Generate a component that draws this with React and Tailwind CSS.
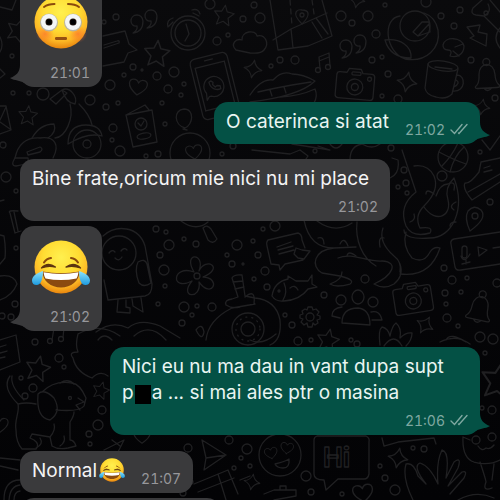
import React from "react";

const messages = [
  { id: 1, emoji: "flushed", time: "21:01", tail: true, layout: "w-fit" },
  { id: 2, mine: true, text: "O caterinca si atat", time: "21:02", tail: true, inline: true, layout: "w-fit mt-[15px]" },
  { id: 3, text: "Bine frate,oricum mie nici nu mi place", time: "21:02", layout: "w-full mt-[15px]" },
  { id: 4, emoji: "joy", time: "21:02", tail: true, layout: "w-fit mt-[5px]" },
  {
    id: 5,
    mine: true,
    text: (
      <>
        Nici eu nu ma dau in vant dupa supt{" "}
        <span className="whitespace-nowrap">
          p<span className="mx-px inline-block h-[19px] w-4 bg-black align-[-5px]" />a
        </span>{" "}
        ... si mai ales ptr o masina
      </>
    ),
    time: "21:06",
    tail: true,
    layout: "w-full mt-4"
  },
  {
    id: 6,
    text: (
      <>
        Normal
        <Joy className="ml-0.5 inline-block h-[24px] w-[26px] align-[-5px]" />
      </>
    ),
    time: "21:07",
    inline: true,
    layout: "w-fit mt-4"
  },
  { id: 7, layout: "mt-[5px] min-h-[42px] min-w-[201px]" }
];

function FaceFill({ id }) {
  return (
    <defs>
      <radialGradient id={id} cx="0.5" cy="0.32" r="0.68">
        <stop offset="0" stopColor="#fff04f" />
        <stop offset="0.5" stopColor="#ffdc33" />
        <stop offset="0.8" stopColor="#fdb725" />
        <stop offset="1" stopColor="#e8850e" />
      </radialGradient>
      <radialGradient id={`${id}-blush`}>
        <stop offset="0" stopColor="#fb6a2c" stopOpacity="0.65" />
        <stop offset="1" stopColor="#fb6a2c" stopOpacity="0" />
      </radialGradient>
      <linearGradient id={`${id}-tear`} x1="0" y1="0" x2="0" y2="1">
        <stop offset="0" stopColor="#8fe3fb" />
        <stop offset="1" stopColor="#1d9be0" />
      </linearGradient>
    </defs>
  );
}

function Flushed({ className }) {
  return (
    <svg viewBox="0 0 58 54" className={className} role="img" aria-label="flushed face">
      <FaceFill id="flushed" />
      <circle cx="29" cy="26" r="26.500" fill="url(#flushed)" />
      <circle cx="13" cy="38" r="9" fill="url(#flushed-blush)" />
      <circle cx="46" cy="38" r="9" fill="url(#flushed-blush)" />
      <path d="M12 11Q16 8 22.500 8M36 8Q43 8 47 11" fill="none" stroke="#8a4a0c" strokeWidth="2" strokeLinecap="round" />
      <circle cx="17" cy="26.500" r="9" fill="#b9b4a2" />
      <circle cx="41" cy="26.500" r="9" fill="#b9b4a2" />
      <circle cx="17" cy="26" r="8" fill="#f4f6f6" />
      <circle cx="41" cy="26" r="8" fill="#f4f6f6" />
      <circle cx="17" cy="26" r="3.500" fill="#1a100a" />
      <circle cx="41" cy="26" r="3.500" fill="#1a100a" />
      <circle cx="17" cy="26" r="2.500" fill="#000" />
      <circle cx="41" cy="26" r="2.500" fill="#000" />
      <rect x="23" y="41" width="12" height="3" rx="1.200" fill="#965011" />
    </svg>
  );
}

function Joy({ className }) {
  return (
    <svg viewBox="0 0 58 54" className={className} role="img" aria-label="face with tears of joy">
      <FaceFill id="joy" />
      <circle cx="29" cy="27" r="26.500" fill="url(#joy)" />
      <path d="M12 22.500Q14.500 18.500 19 18M39 18Q43.500 18.500 46 22.500" fill="none" stroke="#8a4a0c" strokeWidth="2" strokeLinecap="round" />
      <path d="M9.500 28Q15.500 21.500 23.500 27Q15.500 25.500 9.500 28ZM34 27Q42 21.500 48.500 28Q42 25.500 34 27Z" fill="#5c3410" stroke="#5c3410" strokeWidth="1.300" strokeLinejoin="round" />
      <path d="M10.500 31.500Q29 35 47.500 31.500C47.500 41 39 47.500 29 47.500S10.500 41 10.500 31.500Z" fill="#8a4a10" />
      <path d="M11.500 32.300Q29 35.500 46.500 32.300Q46 36 44.500 38.500Q29 41.500 13.500 38.500Q12 36 11.500 32.300Z" fill="#fff" />
      <path d="M11 31C5 33 0 36 0 40.500C0 43.500 2 45 4.500 45C9 45 11 39 11 31ZM47 31C53 33 58 36 58 40.500C58 43.500 56 45 53.500 45C49 45 47 39 47 31Z" fill="url(#joy-tear)" />
    </svg>
  );
}

function Star({ x, y, s = 1, r = 0 }) {
  return (
    <path
      transform={`translate(${x} ${y}) rotate(${r}) scale(${s})`}
      d="M0-11L3-4L11-3L5 3L7 11L0 7L-7 11L-5 3L-11-3L-3-4Z"
    />
  );
}

function Spark({ x, y, s = 1, r = 10 }) {
  return <path transform={`translate(${x} ${y}) rotate(${r}) scale(${s})`} d="M0-10Q2-2 10 0Q2 2 0 10Q-2 2-10 0Q-2-2 0-10Z" />;
}

function Heart({ x, y, s = 1, r = 0 }) {
  return (
    <path
      transform={`translate(${x} ${y}) rotate(${r}) scale(${s})`}
      d="M0 8C-6 4-9 1-9-3C-9-8-2-9 0-4C2-9 9-8 9-3C9 1 6 4 0 8Z"
    />
  );
}

function Camera({ x, y, r }) {
  return (
    <g transform={`translate(${x} ${y}) rotate(${r})`}>
      <path d="M-16-12H-9L-7-16H5L7-12H16Q19-12 19-9V11Q19 14 16 14H-16Q-19 14-19 11V-9Q-19-12-16-12Z" />
      <circle cy="2" r="8" />
      <circle cy="2" r="3.500" />
      <rect x="-4" y="-13" width="9" height="3" rx="1" />
      <circle cx="14" cy="-7" r="2" />
    </g>
  );
}

function Bell({ x, y, r }) {
  return (
    <g transform={`translate(${x} ${y}) rotate(${r})`}>
      <path d="M-12 11Q-8 8-8 0C-8-14 8-14 8 0Q8 8 12 11Q13 13 9 13H-10Q-13 13-12 11ZM-4 13Q0 18 4 13" />
      <circle cy="-13" r="3.500" />
    </g>
  );
}

function Quotes({ x, y }) {
  return (
    <g transform={`translate(${x} ${y})`}>
      <path d="M0-7C-8-7-8 5 0 4Q1 8-4 11Q6 10 6-1Q5-7 0-7Z" />
      <path d="M14-12C6-12 6 0 14-1Q15 3 10 6Q20 5 20-6Q19-12 14-12Z" />
    </g>
  );
}

// [x, y, radius]
const dots = [
  [116, 17, 3], [104, 22, 2], [210, 4, 5], [228, 35, 2], [243, 19, 3], [217, 41, 4], [254, 5, 3], [260, 18, 5],
  [133, 67, 3], [142, 70, 1], [124, 75, 2], [157, 76, 4], [174, 72, 5], [168, 89, 4], [184, 84, 2], [181, 95, 2],
  [110, 85, 5], [90, 100, 5], [43, 94, 6], [29, 93, 2], [13, 93, 2], [106, 107, 3], [118, 103, 2], [162, 103, 2],
  [165, 124, 2], [113, 128, 4], [112, 140, 2], [120, 151, 5], [146, 156, 2], [158, 154, 3], [3, 145, 3], [12, 56, 2],
  [233, 146, 3], [222, 154, 2], [341, 16, 5], [352, 23, 3], [368, 16, 5], [376, 34, 4], [385, 5, 2], [426, 2, 5],
  [441, 16, 3], [460, 10, 3], [454, 26, 3], [372, 60, 3], [382, 57, 2], [388, 74, 3], [295, 60, 4], [280, 60, 3],
  [271, 66, 2], [471, 60, 3], [398, 99, 4], [382, 96, 2], [495, 98, 3], [315, 151, 2], [391, 148, 3], [480, 152, 2],
  [6, 177, 5], [16, 191, 2], [16, 248, 2], [15, 304, 3], [11, 317, 3], [2, 316, 3], [156, 229, 3], [166, 232, 2],
  [169, 245, 5], [184, 239, 2], [196, 244, 3], [237, 245, 5], [227, 255, 2], [160, 255, 3], [164, 270, 5],
  [165, 286, 2], [232, 264, 3], [243, 264, 1], [158, 304, 2], [184, 307, 5], [197, 306, 2], [212, 307, 4],
  [182, 323, 3], [192, 315, 2], [263, 229, 2], [275, 226, 5], [253, 241, 2], [258, 255, 3], [265, 271, 4],
  [254, 279, 2], [267, 287, 3], [365, 279, 4], [324, 295, 3], [285, 315, 2], [292, 325, 3], [404, 170, 3],
  [398, 187, 2], [406, 183, 3], [407, 193, 2], [442, 176, 5], [490, 202, 3], [444, 268, 3], [452, 280, 4],
  [467, 278, 2], [445, 293, 3], [461, 292, 2], [446, 304, 2], [447, 318, 4], [458, 326, 2], [497, 283, 4],
  [35, 342, 3], [59, 358, 4], [21, 378, 2], [25, 396, 3], [33, 388, 4], [64, 367, 2], [102, 410, 4], [98, 425, 5],
  [89, 434, 3], [90, 444, 2], [188, 448, 4], [229, 440, 4], [241, 458, 2], [247, 449, 5], [234, 468, 2],
  [183, 493, 3], [191, 482, 2], [298, 341, 4], [311, 340, 2], [351, 340, 2], [357, 344, 3], [480, 337, 5],
  [493, 339, 5], [485, 353, 2], [413, 448, 2], [424, 449, 3], [380, 466, 2], [385, 478, 3], [395, 490, 5],
  [306, 476, 5], [311, 492, 3], [342, 494, 2], [250, 466, 2], [492, 410, 4], [482, 408, 2]
];

function Wallpaper() {
  return (
    <svg
      viewBox="0 0 500 500"
      preserveAspectRatio="xMidYMin slice"
      className="absolute inset-0 h-full w-full"
      fill="none"
      stroke="#202022"
      strokeWidth="1.300"
      strokeLinejoin="round"
      strokeLinecap="round"
      aria-hidden="true"
    >
      {dots.map(([x, y, r]) => (
        <circle key={`${x}-${y}`} cx={x} cy={y} r={r} />
      ))}

      <Star x={224} y={15} s={0.9} r={8} />
      <Star x={157} y={53} s={1.150} r={5} />
      <Star x={28} y={115} s={0.85} r={5} />
      <Star x={38} y={368} s={1.100} r={12} />
      <Star x={101} y={390} s={0.75} r={15} />
      <Star x={328} y={340} s={1} r={12} />
      <Star x={18} y={30} s={1} r={20} />
      <Star x={499} y={380} s={1.600} r={10} />
      <Spark x={407} y={82} />
      <Spark x={425} y={325} s={0.9} r={30} />
      <Spark x={398} y={458} />
      <Spark x={482} y={107} s={0.8} />
      <Spark x={357} y={0} s={0.8} />
      <Spark x={253} y={69} s={0.9} />
      <Spark x={252} y={482} s={0.8} />
      <Heart x={138} y={87} r={8} />
      <Heart x={363} y={493} s={1.100} r={-8} />
      <Heart x={194} y={152} s={0.9} r={-8} />
      <Heart x={0} y={425} s={0.9} />
      <Heart x={142} y={436} s={0.9} />
      <Quotes x={137} y={22} />
      <Quotes x={346} y={47} />
      <Camera x={355} y={85} r={5} />
      <Camera x={413} y={299} r={-9} />
      <Bell x={487} y={75} r={-3} />
      <Bell x={480} y={307} r={12} />

      {/* alarm clock */}
      <circle cx="188" cy="33" r="17" />
      <circle cx="188" cy="33" r="13" />
      <path d="M186 24L189 34L185 41M173 18Q166 20 168 27M192 10Q198 8 200 14M169 26L173 22M193 13L199 16" />
      {/* ticket */}
      <path d="M103 36L125 31L129 44L137 50L128 53L124 62L103 66M104 45L117 41Q120 40 119 43L104 48" />
      {/* phone */}
      <g transform="translate(215 86) rotate(-14)">
        <rect x="-19" y="-31" width="38" height="62" rx="5" />
        <path d="M-15-22H15V22H-15ZM-4-27H4" />
        <path d="M-8 9L-11 12L-10 5A10 10 0 1 1-6 9Z" />
        <path d="M-5-5C-5 2 1 5 5 4L5 1L2 0L0 1L-2-2L-1-4L-3-6Z" />
      </g>
      {/* greeting card */}
      <path d="M126 115L152 110L157 142L133 147ZM126 115L145 105L149 110" />
      <circle cx="141" cy="124" r="6" />
      <ellipse cx="144" cy="136" rx="7" ry="3" transform="rotate(-10 144 136)" />
      <path d="M138 123L141 126L144 121" />
      {/* balloon */}
      <path d="M184 109C195 109 193 125 185 128C174 125 173 110 184 109ZM183 129L187 130" />
      <circle cx="190" cy="153" r="20" />
      {/* scooter */}
      <path d="M50 99L62 90L67 93L56 104ZM62 90C70 86 78 97 75 104Q66 103 62 90ZM70 104C74 118 66 137 55 138M79 104Q90 115 92 125M15 158C18 144 26 137 40 138C55 136 60 145 53 158" />
      <path d="M27 152L40 147Q44 149 40 152L28 155ZM32 138Q40 124 54 124Q57 132 48 138M68 144Q68 125 86 125Q100 125 102 136Q88 132 68 144" />
      <circle cx="87" cy="144" r="14" />
      <circle cx="87" cy="144" r="4" />
      {/* envelope */}
      <path d="M0 106L6 106L11 130L0 134M0 120L6 107M0 122L10 129" />
      <path d="M0 7L12 10L16 0M0 37Q4 45 0 52M0 69L5 74L0 78" />
      {/* clouds */}
      <path d="M236 50C230 44 236 38 242 40C241 31 256 29 257 36C265 34 270 43 264 50Q261 54 250 53Z" />
      {/* map */}
      <path d="M270 0L278 50L308 46L332 36L322 0M273 40L291 29L327 13M291 29L293 48M316 18L328 34M312 22L322 38" />
      <path d="M290 0L292 26M312 0L314 14" strokeDasharray="5 4" />
      <path d="M302 24C290 12 298 9 302 10C308 10 312 14 302 24Z" />
      <circle cx="302" cy="15" r="2" />
      {/* bird */}
      <circle cx="415" cy="26" r="15" />
      <path d="M400 16C382 18 385 52 405 59C426 63 441 48 438 30C436 20 430 15 424 13M385 40C400 38 412 46 411 58Q390 58 385 40ZM413 32L422 22L429 22L430 32L418 36ZM418 36L429 24" />
      {/* lightning */}
      <path d="M467 27L480 25L478 32L487 34L486 46L470 38L474 36Z" />
      {/* croissant */}
      <path d="M443 45C445 36 462 37 464 46C464 55 456 58 450 56Q453 50 448 50Q443 50 443 45ZM455 47L463 44M453 51L459 56" />
      {/* mug */}
      <ellipse cx="443" cy="66" rx="15" ry="5" transform="rotate(8 443 66)" />
      <path d="M428 64L425 88Q426 95 436 97Q446 100 452 94L458 69M457 75C466 75 466 92 453 91M456 80Q461 83 454 87M435 67L452 69" />
      {/* music notes */}
      <path d="M320 69L319 57L329 53L330 66M319 61L329 57" />
      <circle cx="318" cy="70" r="2.500" />
      <circle cx="328" cy="67" r="2.500" />
      <path d="M52 340L54 328M63 337L64 328" />
      <circle cx="50" cy="341" r="2.500" />
      <circle cx="61" cy="339" r="2.500" />
      {/* lips */}
      <path d="M250 95Q261 78 273 80Q282 70 292 74Q303 74 315 81Q300 96 250 102M258 92Q275 88 292 85L311 82M280 97Q300 96 315 89Q318 96 314 103M270 90L272 96M284 87L286 93" />
      {/* guitar head */}
      <path d="M473 8L482 0M473 8Q470 14 476 15L484 16L500 32M484 16Q492 12 488 4M490 0L500 12M500 28Q492 38 500 48" />
      <circle cx="486" cy="13" r="2" />
      {/* bandage, left edge */}
      <path d="M10 213Q7 210 18 211M10 213L15 233L21 231M14 212L18 231M0 235L4 236Q6 248 5 258L0 264M0 276Q14 274 17 284Q12 296 0 300M0 201L4 200" />
      <path d="M15 158L28 158Q30 164 16 166Q10 166 15 158" />
      {/* astronaut */}
      <circle cx="119" cy="253" r="17" />
      <path d="M103 236C116 224 139 226 145 246L152 284Q152 295 145 296L108 300L104 280M138 262Q145 258 147 264L151 283Q144 288 139 283Q134 270 138 262ZM118 300L117 312L130 313L130 308L126 307L126 300M132 299L133 306L143 312L141 298" />
      <path d="M109 253Q112 249 115 252M121 251Q124 247 127 250M115 258Q119 262 122 257" />
      {/* flower */}
      <path d="M194 272C182 252 206 252 199 271C206 256 225 268 203 277C222 278 212 300 199 282C202 300 178 298 192 281C170 292 172 264 194 272Z" />
      <circle cx="197" cy="276" r="3" />
      {/* magnifier */}
      <path d="M181 221Q196 232 208 222M203 228Q207 224 211 229L217 239Q213 245 208 240Z" />
      {/* rotary telephone */}
      <path d="M226 305Q224 300 232 299L238 297L232 278Q234 274 242 275L245 296L255 298Q276 300 280 320Q282 340 270 345M226 305Q232 309 240 307M206 340Q208 320 232 308L255 304M196 330Q202 322 204 332Q202 342 196 330M233 282L243 281M235 289L244 287M245 297Q256 288 254 304" />
      <circle cx="248" cy="329" r="16" />
      <circle cx="248" cy="329" r="7" />
      <circle cx="248" cy="329" r="12" strokeDasharray="1 5" />
      {/* dinosaur */}
      <path d="M78 334Q75 345 78 352Q68 352 73 358Q76 372 92 378Q100 370 108 376M78 334Q100 322 120 336M98 340Q104 332 112 340M96 332Q112 320 128 328Q140 318 160 326L180 338M134 336Q150 322 166 340" />
      {/* octopus */}
      <path d="M304 220C308 240 318 248 334 248L356 247M317 221Q335 234 352 223M357 222C355 240 362 258 376 266M334 248C314 250 310 266 322 273L340 276Q356 280 350 284Q336 288 330 284Q342 280 342 272M338 258C352 252 366 262 382 261C400 262 392 276 374 284Q384 290 394 284Q404 276 400 264M383 228Q378 242 394 256Q402 262 400 272M402 150L416 192Q398 206 406 226Q412 238 430 233Q434 226 420 228Q414 216 424 206Q440 190 434 176Q428 164 414 166M436 196Q440 184 448 184Q456 180 454 190" />
      <path d="M424 207C436 224 452 216 448 200Q444 188 454 178C466 210 452 238 430 238Q404 240 404 230M406 232Q402 246 412 258Q424 264 430 252Q434 246 440 248M400 274Q430 278 440 248M347 256Q348 250 356 256M380 247Q378 236 384 238M318 238Q324 236 324 244M340 244Q344 236 348 246M426 194Q426 188 434 194M410 222Q416 220 414 214M450 226Q450 222 456 222M454 210Q448 206 456 202" />
      {/* chat card */}
      <path d="M268 240L298 233Q302 234 302 240L305 248M268 240Q266 242 267 246L271 264L279 265L280 270L285 264L303 260M277 247L291 242M278 250L293 246M279 254L294 250M296 248L302 250L310 251L304 259L298 258L294 254Z" />
      {/* fish */}
      <path d="M272 296Q274 282 288 279L288 276L296 281L308 281L312 275L312 284L317 287L308 289Q300 300 284 301Q276 302 272 296ZM284 283Q288 292 283 300M290 288Q295 284 298 290" />
      <circle cx="279" cy="291" r="1" />
      {/* group of people */}
      <ellipse cx="358" cy="297" rx="6" ry="7" />
      <circle cx="341" cy="300" r="5" />
      <circle cx="373" cy="302" r="5" />
      <path d="M342 323Q342 308 358 308Q370 309 370 325ZM340 318L332 316Q332 308 342 307M371 312Q380 310 382 320L372 320" />
      {/* gear */}
      <path d="M308 307L312 307L313 310L316 309L319 312L317 315L320 316L320 319L317 320L318 323L315 325L313 323L312 327L308 327L307 323L304 325L301 322L303 319L300 318L300 315L303 314L302 311L305 309L307 310Z" />
      <circle cx="310" cy="317" r="4" />
      {/* lotus */}
      <path d="M380 345Q378 330 382 327Q388 328 390 336Q392 326 396 323Q402 328 400 338Q406 332 412 333Q412 340 406 346M384 346Q394 332 402 346" />
      {/* basketball */}
      <circle cx="453" cy="157" r="15" />
      <path d="M439 152Q454 160 466 164M450 172Q454 156 464 147M442 166Q452 156 458 143" />
      {/* sneaker */}
      <path d="M481 162L500 158M481 162L479 172Q470 184 465 183Q462 188 472 200L500 182M468 192L500 174M484 168L490 166M484 172L492 170" />
      {/* location pin */}
      <path d="M470 231Q464 218 468 211Q474 204 481 210Q488 218 470 231Z" />
      <circle cx="475" cy="216" r="3" />
      {/* voice card */}
      <path d="M500 232L454 239Q450 240 451 244L455 267Q456 271 461 270L500 264M478 247L487 250L479 256ZM493 248L500 247M461 256Q464 264 470 254M466 260L466 264M462 264L470 262" />
      <rect x="462" y="246" width="5" height="12" rx="2.500" />
      {/* small shapes behind the first reply */}
      <path d="M292 144L330 150L318 146M252 150L290 154L300 150L308 156L304 162M350 160Q350 146 362 144Q372 150 380 144M330 144Q336 152 342 144M392 158L398 160Q400 174 390 178M482 140L490 150L500 136" />
      {/* laptop, left edge */}
      <path d="M0 340L16 335L20 362L0 370M0 347L6 345M0 353L7 351M0 358L5 357" />
      {/* dog */}
      <path d="M10 376C4 384 8 394 18 404C20 412 14 420 16 430Q16 442 22 449L36 449Q40 444 34 440L30 438L32 434L50 437L52 446Q58 450 68 448L76 446Q74 440 70 440L70 422Q74 416 74 412M18 404Q26 402 36 404M42 392Q54 380 72 383Q80 384 86 398L84 406Q80 412 56 410M38 394Q44 388 54 398Q62 412 50 420Q36 418 38 394ZM12 376Q10 386 24 400M78 398L84 402L76 405L80 410" />
      <circle cx="70" cy="398" r="1.500" />
      <path d="M60 383Q68 378 74 384M50 437Q56 430 54 424M40 438Q44 444 36 448M64 436Q66 442 60 446" />
      {/* ice cream */}
      <path d="M104 450L124 440L116 456M112 440L120 446" />
      {/* paper plane */}
      <path d="M202 440L226 455L204 470L206 458ZM206 458L226 455M0 458L20 460M0 466L18 470" />
      {/* rainbow */}
      <path d="M4 500Q4 480 20 480M9 500Q10 486 20 485M14 500Q14 492 20 491" />
      {/* gift box */}
      <path d="M194 484L228 470L238 494M218 474L226 500M198 492L234 478M240 480L250 476" />
      {/* heart eyes */}
      <circle cx="280" cy="455" r="21" />
      <Heart x={271} y={453} s={0.7} r={-10} />
      <Heart x={287} y={448} s={0.7} r={8} />
      <path d="M275 464Q284 462 289 459Q290 468 283 468Q277 468 275 464Z" />
      {/* "Hi" bubble */}
      <path d="M317 436H366Q370 438 369 442V474Q368 479 364 479H338L326 490L324 480Q314 480 314 474V440Q314 437 317 436Z" />
      <text x="323" y="467" fontSize="28" fontWeight="700" fontFamily="Roboto, sans-serif">
        Hi
      </text>
      {/* signpost */}
      <path d="M264 494L274 490L296 490L296 496L274 500M280 490L280 486L286 486L286 490" />
      {/* hand */}
      <path d="M413 500Q402 478 406 464Q414 462 418 476L426 484Q412 466 420 463Q430 466 438 484Q436 462 442 450Q450 452 446 478L454 462Q462 456 458 468L448 486L462 472Q468 470 464 478L450 494" />
      {/* cat */}
      <path d="M463 437Q462 458 474 462Q488 466 500 460M463 437L470 440M480 462Q486 480 486 482Q482 492 492 488M494 464L492 480M478 446Q482 452 486 448Q490 450 494 445M382 438L384 446L398 442L434 438L436 444" />
      <circle cx="476" cy="440" r="4" />
      <circle cx="492" cy="437" r="4" />
      <path d="M458 500Q476 490 494 498M440 342Q456 334 470 344M250 340Q262 346 276 334M446 340Q450 332 466 342M76 0L76 8" />
    </svg>
  );
}

function Tail({ mine }) {
  return (
    <svg
      viewBox="0 0 20 20"
      className={`absolute bottom-[2px] h-5 w-5 ${mine ? "-right-[10px] -scale-x-100 text-[#045145]" : "-left-[10px] text-[#3a3a3c]"}`}
      aria-hidden="true"
    >
      <path d="M10 0C10 7 6 11 0 13C5 16 10 15 14 18L22 20V0Z" fill="currentColor" />
    </svg>
  );
}

function Checks() {
  return (
    <svg viewBox="0 0 18 12" className="mb-[3px] h-3 w-[18px]" fill="none" stroke="currentColor" strokeWidth="1.400" strokeLinecap="round" aria-hidden="true">
      <path d="M1 7L4.500 10.500L12 1.500M8.500 10L9 10.500L17 1.500" />
    </svg>
  );
}

function Meta({ time, mine }) {
  return (
    <div className={`flex items-end justify-end gap-[5px] text-[14px] leading-4 tabular-nums ${mine ? "text-[#7fa8a1]" : "text-[#97979b]"}`}>
      <time>{time}</time>
      {mine && <Checks />}
    </div>
  );
}

function Bubble({ message }) {
  const { mine, text, emoji, time, tail, inline, layout } = message;
  return (
    <li
      className={`relative max-w-[370px] rounded-[14px] px-3 pb-[6px] ${layout} ${
        mine ? "self-end bg-[#045145] text-[#e9f5f2]" : "self-start bg-[#3a3a3c] text-[#f4f4f5]"
      } ${emoji ? "pt-[14px]" : "pt-[7px]"} ${inline ? "flex items-end gap-4" : ""}`}
    >
      {tail && <Tail mine={mine} />}
      {emoji === "flushed" && <Flushed className="mb-[15px] h-[54px] w-[58px] overflow-visible" />}
      {emoji === "joy" && <Joy className="mb-[15px] h-[54px] w-[58px]" />}
      {text && <p className={`text-[19px] leading-[26px] ${inline ? "mb-[3px]" : "mb-[7px]"}`}>{text}</p>}
      {time && <Meta time={time} mine={mine} />}
    </li>
  );
}

export default function App() {
  return (
    <main className="relative h-screen overflow-hidden bg-linear-to-b from-[#0a0a0c] to-[#030305] font-['Inter','Liberation_Sans',sans-serif]">
      <Wallpaper />
      <ul className="relative -mt-[18px] flex flex-col px-5">
        {messages.map((m) => (
          <Bubble key={m.id} message={m} />
        ))}
      </ul>
    </main>
  );
}
